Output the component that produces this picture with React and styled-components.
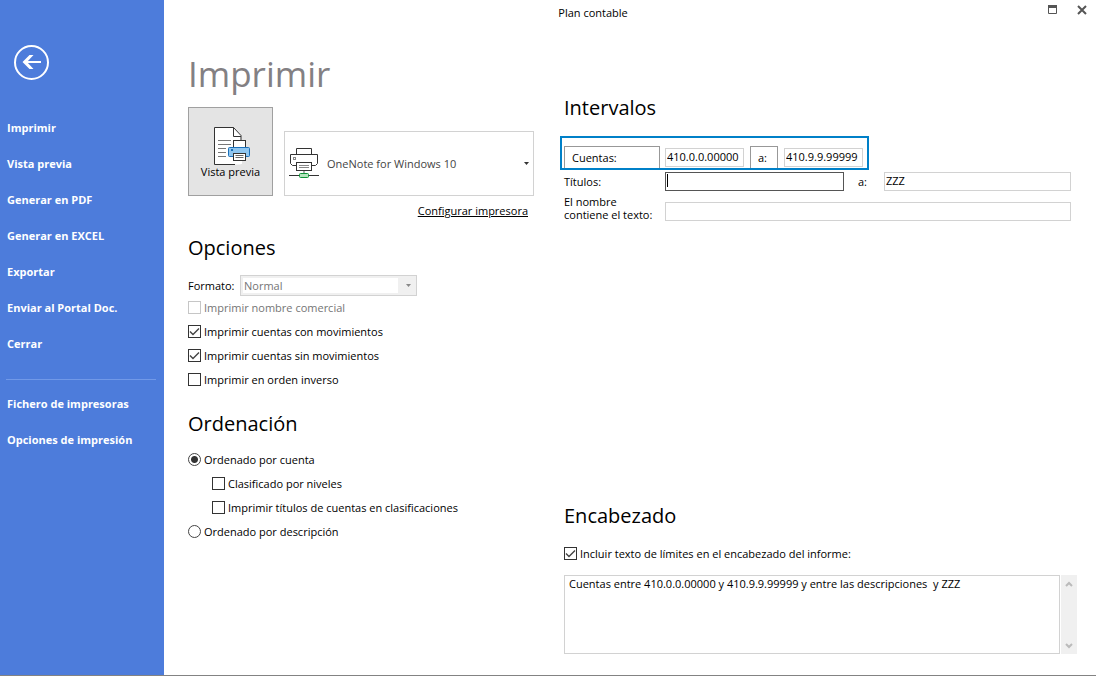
import { useState } from "react"
import styled, { createGlobalStyle } from "styled-components"

const GlobalStyle = createGlobalStyle`
*, *::before, *::after {
box-sizing: border-box;
}
body {
margin: 0;
background-color: white;
color: black;
font-family: "Open Sans", "Noto Sans", sans-serif;
font-size: 11px;
line-height: 16px;
}
button, input, select, textarea {
font: inherit;
color: inherit;
margin: 0;
padding: 0;
}
`

const Page = styled.div`
display: flex;
min-height: 100vh;
border-bottom: 1px solid #838383;
`

const Sidebar = styled.nav`
flex: 0 0 164px;
padding: 45px 0 0 7px;
background-color: #4d7cdb;
color: white;
`

const BackButton = styled.button`
display: block;
width: 35px;
height: 35px;
margin: 0 0 30px 7px;
border: none;
background: none;
cursor: pointer;
`

const MenuList = styled.ul`
margin: 0;
padding: 0;
list-style: none;
`

const MenuLink = styled.a`
display: block;
font-size: 11px;
font-weight: 700;
line-height: 36px;
color: white;
text-decoration: none;
`

const Divider = styled.hr`
width: 150px;
height: 1px;
margin: 17px 0 6px -1px;
border: none;
background-color: #7199e8;
`

const Main = styled.main`
flex: 1;
display: flex;
flex-direction: column;
min-width: 0;
`

const TitleBar = styled.header`
display: flex;
height: 26px;
`

const WindowTitle = styled.span`
flex: 1;
text-align: center;
font-size: 11px;
line-height: 26px;
`

const WindowControls = styled.div`
display: flex;
justify-content: space-between;
width: 74px;
padding: 0 4px 7px 20px;
`

const WindowButton = styled.button`
display: grid;
place-items: center;
width: 20px;
border: none;
background: none;
`

const Content = styled.div`
flex: 1;
display: grid;
grid-template-columns: 346px 1fr;
column-gap: 30px;
padding: 24px 19px 21px 24px;
`

const Column = styled.div`
display: flex;
flex-direction: column;
min-width: 0;
`

const PageTitle = styled.h1`
margin: 0 0 9px;
font-size: 35px;
font-weight: 400;
line-height: 48px;
color: #838083;
`

const PrintRow = styled.div`
display: flex;
align-items: flex-end;
gap: 11px;
`

const PreviewButton = styled.button`
display: flex;
flex-direction: column;
align-items: center;
width: 85px;
height: 89px;
padding-top: 19px;
border: 1px solid #a0a0a0;
background-color: #e4e4e4;
line-height: 14px;
svg {
margin-left: 3px;
}
`

const PrinterBox = styled.label`
flex: 1;
display: flex;
align-items: center;
height: 65px;
padding: 0 4px;
border: 1px solid #d2d2d2;
`

const PrinterSelect = styled.select`
flex: 1;
min-width: 0;
margin-left: 8px;
appearance: none;
border: none;
background: none;
font-size: 11px;
color: #444;
`

const ConfigLink = styled.a`
align-self: flex-end;
margin: 6px 6px 0 0;
font-size: 11px;
line-height: 18px;
color: black;
text-decoration: underline;
`

const Heading = styled.h2`
margin: 0;
font-size: 20px;
font-weight: 400;
line-height: 28px;
`

const OptionsSection = styled.section`
margin-top: 14px;
`

const OrderSection = styled.section`
margin-top: 18px;
`

const FormatRow = styled.div`
display: flex;
align-items: center;
justify-content: space-between;
width: 229px;
height: 21px;
margin-top: 13px;
`

const FormatBox = styled.div`
display: flex;
align-items: center;
width: 177px;
height: 21px;
padding: 2px 5px 2px 2px;
border: 1px solid #d2d2d2;
background-color: #f0f0f0;
`

const FormatSelect = styled.select`
width: 155px;
height: 15px;
padding-left: 1px;
appearance: none;
border: none;
background-color: white;
line-height: 15px;
color: #757575;
opacity: 1;
`

const ArrowSlot = styled.span`
flex: 1;
display: flex;
justify-content: flex-end;
`

const CheckRow = styled.label`
display: flex;
align-items: center;
gap: 3px;
height: 24px;
padding-left: ${props => props.$nested ? "24px" : "0"};
color: ${props => props.$disabled ? "#757575" : "black"};
`

const Checkbox = styled.input`
flex: none;
appearance: none;
width: 13px;
height: 13px;
margin-bottom: 1px;
border: 1px solid #333;
background-color: white;
&:disabled {
border-color: #c6c6c6;
}
&:checked {
background-image: url("data:image/svg+xml,%3Csvg xmlns='http://www.w3.org/2000/svg' width='11' height='11'%3E%3Cpath d='M1 5.5L4 8.5L10 2.5' fill='none' stroke='%23444' stroke-width='1.4'/%3E%3C/svg%3E");
}
`

const Radio = styled.input`
flex: none;
appearance: none;
width: 13px;
height: 13px;
margin-bottom: 1px;
border: 1px solid #444;
border-radius: 50%;
background-color: white;
&:checked {
background-image: radial-gradient(circle, #333 3px, white 4px);
}
`

const CheckList = styled.div`
margin-top: ${props => props.$space || 0}px;
`

const RangeSection = styled.section`
margin-top: 44px;
`

const HighlightedRange = styled.div`
display: flex;
width: 309px;
height: 34px;
margin: 14px 0 0 -4px;
padding: 8px 2px 0;
border: 2px solid #0080c8;
`

const RangeLabel = styled.label`
flex: none;
width: ${props => props.$wide ? "96px" : "28px"};
margin-right: ${props => props.$wide ? "5px" : "6px"};
padding: 3px 0 0 7px;
border: 1px solid #989898;
border-bottom: none;
`

const TextInput = styled.input`
width: 179px;
height: 19px;
padding: 0 1px 2px;
border: 1px solid #d2d2d2;
background-color: white;
outline: none;
`

const AccountInput = styled(TextInput)`
flex: none;
width: 79px;
margin: 2px 6px 0 0;
`

const ActiveInput = styled(TextInput)`
border-color: #555;
background: linear-gradient(black, black) 1px 1px / 1px 13px no-repeat;
`

const WideInput = styled(TextInput)`
flex: 1;
min-width: 0;
`

const Fields = styled.div`
display: grid;
row-gap: 4px;
margin: 2px 6px 0 0;
`

const FieldRow = styled.div`
display: flex;
align-items: ${props => props.$tall ? "flex-end" : "center"};
`

const FieldLabel = styled.label`
width: 101px;
line-height: 13px;
`

const ToLabel = styled.label`
width: 40px;
padding-left: 14px;
`

const HeaderSection = styled.section`
margin-top: auto;
`

const ReportText = styled.div`
display: flex;
gap: 1px;
height: 79px;
margin-top: 9px;
`

const ReportArea = styled.textarea`
flex: 1;
padding: 0 4px;
border: 1px solid #d2d2d2;
resize: none;
outline: none;
overflow: hidden;
`

const ScrollTrack = styled.div`
display: flex;
flex-direction: column;
justify-content: space-between;
width: 16px;
background-color: #f0f0f0;
`

const ScrollButton = styled.button`
display: grid;
place-items: center;
height: 17px;
border: none;
background: none;
`

const mainLinks = ["Imprimir", "Vista previa", "Generar en PDF", "Generar en EXCEL", "Exportar", "Enviar al Portal Doc.", "Cerrar"]
const configLinks = ["Fichero de impresoras", "Opciones de impresión"]

const BackIcon = () => (
    <svg width="35" height="35" viewBox="0 0 35 35" fill="none" stroke="white" strokeWidth="2">
        <circle cx="17.5" cy="17.5" r="16.5" />
        <path d="M27 17H11" />
        <path d="M8.5 17L15.5 10H19.5L13 17L19.5 24H15.5Z" fill="white" stroke="none" />
    </svg>
)

const PreviewIcon = () => (
    <svg width="36" height="38" viewBox="0 0 36 38" fill="none" stroke="#333">
        <path d="M19.5 .5H.5V37.5H26.5V7.5Z" fill="white" stroke="none" />
        <path d="M21 37.5H.5V.5H19.5L27 8.5V13" />
        <path d="M19.5 .5V9.5H27" />
        <path d="M4 13.5H17M4 17.5H17M4 21.5H12M4 25.5H12M4 29.5H12" stroke="#777" />
        <path d="M13 20H19V13H28V37H22V34H18V31H13Z" fill="white" stroke="none" />
        <rect x="19.5" y="13.5" width="12" height="8" fill="white" />
        <path d="M14.5 21.5Q14.5 20.5 15.5 20.5H34.5Q35.5 20.5 35.5 21.5V28.5Q35.5 29.5 34.5 29.5H15.5Q14.5 29.5 14.5 28.5Z" fill="#8fc6f0" stroke="#1b6fb8" />
        <rect x="17" y="22" width="2" height="2" fill="#1b6fb8" stroke="none" />
        <rect x="19.5" y="26.5" width="12" height="7" fill="white" />
        <path d="M21.5 28.5H29.5M21.5 30.5H29.5" stroke="#666" />
    </svg>
)

const PrinterIcon = () => (
    <svg width="30" height="31" viewBox="0 0 30 31" fill="none" stroke="#333">
        <path d="M7.5 6.5V.5H22.5V6.5" />
        <path d="M7.5 17.5H3.5L1.5 15.5V6.5H28.5V15.5L26.5 17.5H22.5" />
        <rect x="4.5" y="9.5" width="2" height="2" stroke="#888" />
        <rect x="7.5" y="14.5" width="15" height="8" fill="white" />
        <path d="M10 17.5H20M10 19.5H20" stroke="#888" />
        <path d="M15 23V25" stroke="#aaa" strokeWidth="2" />
        <path d="M0 27.5H10M20 27.5H30" />
        <rect x="10.5" y="25.5" width="9" height="4" rx="1" fill="#b4e4bd" stroke="#0f9438" />
    </svg>
)

const DownArrow = ({ color }) => (
    <svg width="5" height="3" viewBox="0 0 5 3"><path d="M0 0H5L2.5 3Z" fill={color} /></svg>
)

const MaximizeIcon = () => (
    <svg width="9" height="9" viewBox="0 0 9 9"><path d="M.5 .5H8.5V8.5H.5Z" fill="none" stroke="#555" /><path d="M0 0H9V3H0Z" fill="#555" /></svg>
)

const CloseIcon = () => (
    <svg width="10" height="10" viewBox="0 0 10 10"><path d="M1 1L9 9M9 1L1 9" stroke="#555" strokeWidth="2" /></svg>
)

const Chevron = ({ down }) => (
    <svg width="8" height="6" viewBox="0 0 8 6"><path d={down ? "M1 1L4 4L7 1" : "M1 5L4 2L7 5"} fill="none" stroke="#bbb" strokeWidth="2" /></svg>
)

function CheckOption({ label, checked = false, disabled, nested }) {
    const [on, setOn] = useState(checked)
    return (
        <CheckRow $nested={nested} $disabled={disabled}>
            <Checkbox type="checkbox" checked={on} disabled={disabled} onChange={() => setOn(!on)} />
            {label}
        </CheckRow>
    )
}

function App() {
    const [order, setOrder] = useState("cuenta")

    return <>
        <GlobalStyle />
        <Page>
            <Sidebar>
                <BackButton aria-label="Volver"><BackIcon /></BackButton>
                <MenuList>
                    {mainLinks.map(link => <li key={link}><MenuLink href="#">{link}</MenuLink></li>)}
                </MenuList>
                <Divider />
                <MenuList>
                    {configLinks.map(link => <li key={link}><MenuLink href="#">{link}</MenuLink></li>)}
                </MenuList>
            </Sidebar>
            <Main>
                <TitleBar>
                    <WindowTitle>Plan contable</WindowTitle>
                    <WindowControls>
                        <WindowButton aria-label="Maximizar"><MaximizeIcon /></WindowButton>
                        <WindowButton aria-label="Cerrar ventana"><CloseIcon /></WindowButton>
                    </WindowControls>
                </TitleBar>
                <Content>
                    <Column>
                        <PageTitle>Imprimir</PageTitle>
                        <PrintRow>
                            <PreviewButton><PreviewIcon />Vista previa</PreviewButton>
                            <PrinterBox>
                                <PrinterIcon />
                                <PrinterSelect aria-label="Impresora">
                                    <option>OneNote for Windows 10</option>
                                </PrinterSelect>
                                <DownArrow color="#333" />
                            </PrinterBox>
                        </PrintRow>
                        <ConfigLink href="#">Configurar impresora</ConfigLink>
                        <OptionsSection>
                            <Heading>Opciones</Heading>
                            <FormatRow>
                                <label htmlFor="formato">Formato:</label>
                                <FormatBox>
                                    <FormatSelect id="formato" disabled>
                                        <option>Normal</option>
                                    </FormatSelect>
                                    <ArrowSlot><DownArrow color="#888" /></ArrowSlot>
                                </FormatBox>
                            </FormatRow>
                            <CheckList>
                                <CheckOption label="Imprimir nombre comercial" disabled />
                                <CheckOption label="Imprimir cuentas con movimientos" checked />
                                <CheckOption label="Imprimir cuentas sin movimientos" checked />
                                <CheckOption label="Imprimir en orden inverso" />
                            </CheckList>
                        </OptionsSection>
                        <OrderSection>
                            <Heading>Ordenación</Heading>
                            <CheckList $space={10}>
                                <CheckRow>
                                    <Radio type="radio" name="orden" checked={order === "cuenta"} onChange={() => setOrder("cuenta")} />
                                    Ordenado por cuenta
                                </CheckRow>
                                <CheckOption label="Clasificado por niveles" nested />
                                <CheckOption label="Imprimir títulos de cuentas en clasificaciones" nested />
                                <CheckRow>
                                    <Radio type="radio" name="orden" checked={order === "descripcion"} onChange={() => setOrder("descripcion")} />
                                    Ordenado por descripción
                                </CheckRow>
                            </CheckList>
                        </OrderSection>
                    </Column>
                    <Column>
                        <RangeSection>
                            <Heading>Intervalos</Heading>
                            <HighlightedRange>
                                <RangeLabel htmlFor="cuentaDesde" $wide>Cuentas:</RangeLabel>
                                <AccountInput id="cuentaDesde" defaultValue="410.0.0.00000" />
                                <RangeLabel htmlFor="cuentaHasta">a:</RangeLabel>
                                <AccountInput id="cuentaHasta" defaultValue="410.9.9.99999" />
                            </HighlightedRange>
                            <Fields>
                                <FieldRow>
                                    <FieldLabel htmlFor="tituloDesde">Títulos:</FieldLabel>
                                    <ActiveInput id="tituloDesde" />
                                    <ToLabel htmlFor="tituloHasta">a:</ToLabel>
                                    <WideInput id="tituloHasta" defaultValue="ZZZ" />
                                </FieldRow>
                                <FieldRow $tall>
                                    <FieldLabel htmlFor="contiene">El nombre<br />contiene el texto:</FieldLabel>
                                    <WideInput id="contiene" />
                                </FieldRow>
                            </Fields>
                        </RangeSection>
                        <HeaderSection>
                            <Heading>Encabezado</Heading>
                            <CheckList $space={12}>
                                <CheckOption label="Incluir texto de límites en el encabezado del informe:" checked />
                            </CheckList>
                            <ReportText>
                                <ReportArea aria-label="Texto del encabezado" defaultValue="Cuentas entre 410.0.0.00000 y 410.9.9.99999 y entre las descripciones  y ZZZ" />
                                <ScrollTrack>
                                    <ScrollButton aria-label="Subir"><Chevron /></ScrollButton>
                                    <ScrollButton aria-label="Bajar"><Chevron down /></ScrollButton>
                                </ScrollTrack>
                            </ReportText>
                        </HeaderSection>
                    </Column>
                </Content>
            </Main>
        </Page>
    </>
}

export default App
